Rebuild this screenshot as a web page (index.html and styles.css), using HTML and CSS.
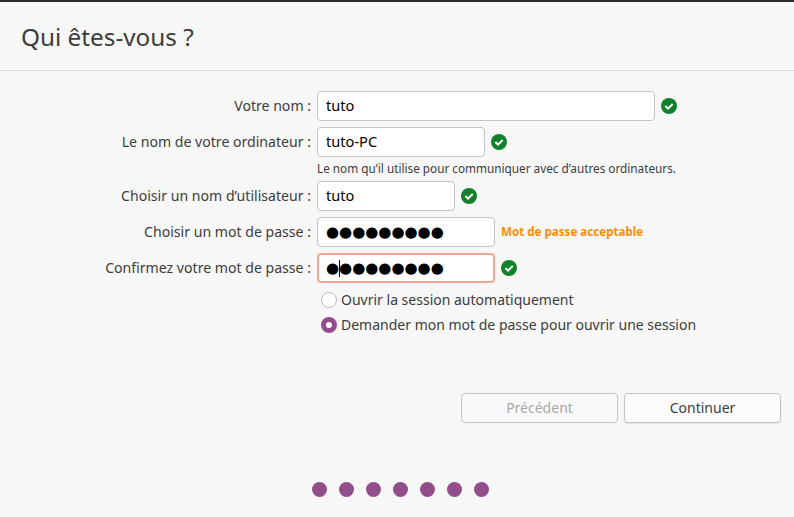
FILE: index.html
```html
<!DOCTYPE html>
<html lang="fr">
<head>
<meta charset="utf-8">
<title>Qui êtes-vous ?</title>
<link rel="stylesheet" href="styles.css">
</head>
<body>
<div class="page">
  <header class="head"><h1>Qui êtes-vous ?</h1></header>
  <main class="form">
    <div class="row">
      <label>Votre nom :</label>
      <div class="field w338">tuto</div>
      <svg class="ok" viewBox="0 0 16 16"><circle cx="8" cy="8" r="8" fill="#0f8229"/><path d="M4.3 8.1 7 10.6 11.7 6" fill="none" stroke="#fff" stroke-width="2"/></svg>
    </div>
    <div class="row">
      <label>Le nom de votre ordinateur :</label>
      <div class="field w168">tuto-PC</div>
      <svg class="ok" viewBox="0 0 16 16"><circle cx="8" cy="8" r="8" fill="#0f8229"/><path d="M4.3 8.1 7 10.6 11.7 6" fill="none" stroke="#fff" stroke-width="2"/></svg>
    </div>
    <p class="hint">Le nom qu’il utilise pour communiquer avec d’autres ordinateurs.</p>
    <div class="row">
      <label>Choisir un nom d’utilisateur :</label>
      <div class="field w138">tuto</div>
      <svg class="ok" viewBox="0 0 16 16"><circle cx="8" cy="8" r="8" fill="#0f8229"/><path d="M4.3 8.1 7 10.6 11.7 6" fill="none" stroke="#fff" stroke-width="2"/></svg>
    </div>
    <div class="row">
      <label>Choisir un mot de passe :</label>
      <div class="field w178 pass">●●●●●●●●●</div>
      <span class="strength">Mot de passe acceptable</span>
    </div>
    <div class="row">
      <label>Confirmez votre mot de passe :</label>
      <div class="field w178 pass focus">●●●●●●●●●<span class="caret"></span></div>
      <svg class="ok" viewBox="0 0 16 16"><circle cx="8" cy="8" r="8" fill="#0f8229"/><path d="M4.3 8.1 7 10.6 11.7 6" fill="none" stroke="#fff" stroke-width="2"/></svg>
    </div>
    <div class="choices">
      <div class="choice"><span class="radio"></span><span class="choice-text">Ouvrir la session automatiquement</span></div>
      <div class="choice"><span class="radio on"></span><span class="choice-text">Demander mon mot de passe pour ouvrir une session</span></div>
    </div>
  </main>
  <div class="actions">
    <button class="btn off" type="button">Précédent</button>
    <button class="btn" type="button">Continuer</button>
  </div>
  <div class="steps">
    <i></i><i></i><i></i><i></i><i></i><i></i><i></i>
  </div>
</div>
</body>
</html>
```
FILE: styles.css
```css
* { box-sizing: border-box; }
html, body { margin: 0; height: 100%; }
body {
  background: #f7f7f7;
  color: #3d3d3d;
  font-family: "Noto Sans", sans-serif;
  font-size: 14px;
  overflow: hidden;
}
.page {
  height: 517px;
  display: flex;
  flex-direction: column;
  border-top: 2px solid #2c2c2c;
}
.head {
  height: 69px;
  border-bottom: 1px solid #dcdcdc;
  padding: 19px 0 0 21px;
}
.head h1 {
  margin: 0;
  font-size: 24.3px;
  line-height: 32px;
  font-weight: 400;
  color: #3d3d3d;
}
.form {
  padding-top: 20px;
  display: flex;
  flex-direction: column;
}
.row {
  display: flex;
  align-items: center;
  height: 30px;
  margin-bottom: 6px;
}
.row label {
  width: 311px;
  text-align: right;
  margin-right: 6px;
  flex: none;
  font-size: 14.1px;
  padding-bottom: 2px;
}
.field {
  position: relative;
  height: 30px;
  padding: 0 8px;
  background: #fff;
  border: 1px solid #c4c4c4;
  border-radius: 4px;
  color: #000;
  line-height: 26px;
  font-size: 14.6px;
  margin-right: 6px;
}
.w338 { width: 338px; }
.w168 { width: 168px; }
.w138 { width: 138px; }
.w178 { width: 178px; }
.pass {
  font-family: "DejaVu Sans", sans-serif;
  font-size: 15px;
  line-height: 28px;
}
.focus { border: 2px solid #f4a78f; padding: 0 7px; line-height: 26px; }
.caret {
  position: absolute;
  left: 20px;
  top: 5px;
  width: 1px;
  height: 17px;
  background: #000;
}
.ok { width: 16px; height: 16px; flex: none; margin-bottom: 1px; }
.strength {
  color: #ff8c00;
  font-size: 11.6px;
  font-weight: 700;
  padding-bottom: 2px;
}
.hint {
  margin: -2px 0 5px 317px;
  font-size: 11.75px;
  line-height: 15px;
  height: 15px;
}
.choices { margin: -2px 0 0 321px; }
.choice {
  display: flex;
  align-items: center;
  height: 25px;
  white-space: nowrap;
}
.choice-text { padding-bottom: 1px; }
.radio {
  width: 16px;
  height: 16px;
  margin-right: 4px;
  border-radius: 50%;
  background: #fff;
  border: 1px solid #b8b8b8;
  flex: none;
}
.radio.on {
  background: #fff;
  border: 5.5px solid #924d8b;
}
.actions {
  display: flex;
  justify-content: flex-end;
  gap: 6px;
  padding-right: 13px;
  margin-top: 56px;
}
.btn {
  width: 157px;
  height: 30px;
  border: 1px solid #c4c4c4;
  border-radius: 4px;
  background: #fcfcfc;
  color: #3d3d3d;
  font: inherit;
  padding: 0 0 2px;
  box-shadow: 0 1px 1px rgba(0,0,0,.08);
}
.btn.off { color: #a8a8a8; box-shadow: none; background: #f9f9f9; }
.steps {
  display: flex;
  justify-content: center;
  gap: 12px;
  margin-top: 56px;
  padding: 3px 0 0 6px;
}
.steps i {
  width: 15px;
  height: 15px;
  border-radius: 50%;
  background: #924d8b;
}
```
